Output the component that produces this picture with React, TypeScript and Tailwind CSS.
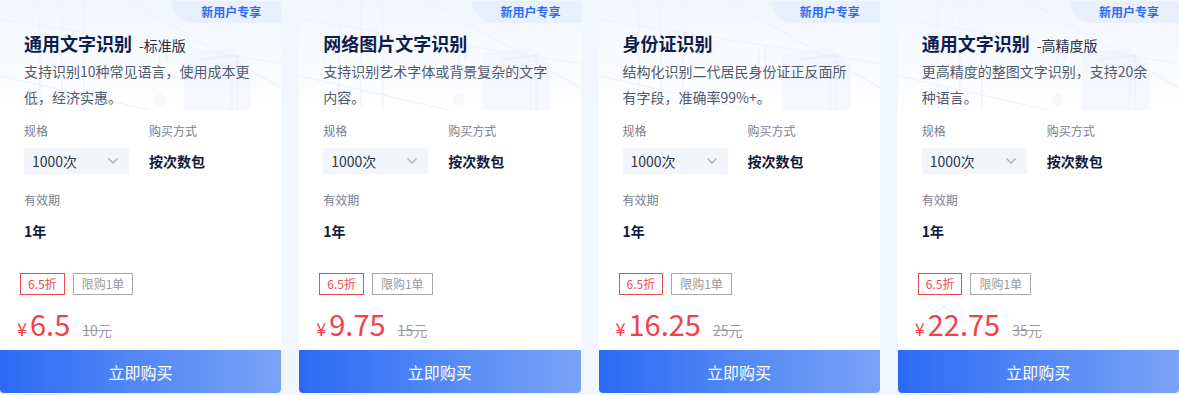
import React from 'react';

type Product = {
  title: string;
  edition?: string;
  desc: string;
  discount: string;
  price: string;
  original: string;
};

const products: Product[] = [
  { title: '通用文字识别', edition: '-标准版', desc: '支持识别10种常见语言，使用成本更低，经济实惠。', discount: '6.5折', price: '6.5', original: '10元' },
  { title: '网络图片文字识别', desc: '支持识别艺术字体或背景复杂的文字内容。', discount: '6.5折', price: '9.75', original: '15元' },
  { title: '身份证识别', desc: '结构化识别二代居民身份证正反面所有字段，准确率99%+。', discount: '6.5折', price: '16.25', original: '25元' },
  { title: '通用文字识别', edition: '-高精度版', desc: '更高精度的整图文字识别，支持20余种语言。', discount: '6.5折', price: '22.75', original: '35元' },
];

// faint decorative background behind the card title
const HeaderArt = () => (
  <svg className="absolute inset-0 w-full h-full pointer-events-none" viewBox="0 0 282 108" preserveAspectRatio="none" fill="none">
    <defs>
      <linearGradient id="fade" x1="0" y1="0" x2="0" y2="1">
        <stop offset="0" stopColor="#f1f5fd" />
        <stop offset="1" stopColor="#ffffff" />
      </linearGradient>
    </defs>
    <rect width="282" height="108" fill="url(#fade)" />
    <g stroke="#edf1fa" strokeWidth="1">
      <path d="M0 18 L282 62" />
      <path d="M40 0 L40 108" />
      <path d="M62 0 L62 108" />
      <path d="M84 0 L84 108" />
      <path d="M130 0 L282 86" />
      <path d="M0 74 L150 108" />
    </g>
    <g opacity="0.55">
      <path d="M184 52 L232 46 L252 62 L252 108 L184 108 Z" fill="#eef3fd" />
      <path d="M202 58 L238 54 L238 108" stroke="#dfe8fb" strokeWidth="2" />
      <path d="M214 66 L232 64 L232 108" stroke="#e5edfc" strokeWidth="3" />
      <path d="M160 48 L160 64" stroke="#e4ebf9" strokeWidth="2" />
      <path d="M167 44 L167 60" stroke="#e4ebf9" strokeWidth="2" />
      <circle cx="160" cy="98" r="6" fill="#eef2fb" />
    </g>
  </svg>
);

const Card = ({ p }: { p: Product }) => (
  <div className="flex-1 min-w-0 h-[392px] bg-white rounded-[4px] overflow-hidden flex flex-col">
    <div className="relative h-[109px] px-6 pt-[29px]">
      <HeaderArt />
      <div className="absolute top-0 right-0 w-[109px] h-[22px] bg-[#e8effd] rounded-bl-[22px] flex items-center justify-end pr-[20px] text-[12px] font-bold text-[#2f6cee]">
        新用户专享
      </div>
      <div className="relative flex items-baseline h-[26px]">
        <span className="text-[18px] font-bold text-[#101d4b]">{p.title}</span>
        {p.edition && <span className="ml-[7px] text-[14px] text-[#2a3040]">{p.edition}</span>}
      </div>
      <p className="relative mt-[2px] text-[14px] leading-[26px] text-[#525b6e] pr-[6px]">{p.desc}</p>
    </div>
    <div className="px-6 flex flex-col flex-1">
      <div className="grid grid-cols-[125px_1fr] mt-3">
        <div>
          <div className="text-[12px] leading-[18px] text-[#7a8090]">规格</div>
          <div className="mt-2 w-[105px] h-[26px] bg-[#f2f5fa] flex items-center justify-between pl-[8px] pr-[10px] text-[14px] text-[#2c3547]">
            <span>1000次</span>
            <svg width="12" height="8" viewBox="0 0 12 8" fill="none">
              <path d="M1.5 1.5 L6 6 L10.5 1.5" stroke="#a9afbb" strokeWidth="1.3" />
            </svg>
          </div>
        </div>
        <div>
          <div className="text-[12px] leading-[18px] text-[#7a8090]">购买方式</div>
          <div className="mt-2 h-[26px] flex items-center text-[14px] font-bold text-[#111a3c]">按次数包</div>
        </div>
      </div>
      <div className="mt-[17px] text-[12px] leading-[18px] text-[#7a8090]">有效期</div>
      <div className="mt-[12px] text-[14px] leading-[20px] font-bold text-[#111a3c]">1年</div>
      <div className="mt-8 flex gap-2 -ml-[4px]">
        <span className="h-[22px] px-[7px] border border-[#ef4a4f] text-[#ef4a4f] text-[12px] leading-[20px]">{p.discount}</span>
        <span className="h-[22px] px-[8px] border border-[#a8a8a8] text-[#9a9a9a] text-[12px] leading-[20px]">限购1单</span>
      </div>
      <div className="mt-[10px] flex items-baseline -ml-[7px] text-[#f2414b] h-[36px]">
        <span className="text-[18px] mr-[3px]">¥</span>
        <span className="text-[29px] leading-[36px]">{p.price}</span>
        <span className="ml-[12px] text-[14px] text-[#9c9c9c] line-through">{p.original}</span>
      </div>
    </div>
    <button className="h-[43px] w-full bg-gradient-to-r from-[#2a6af4] to-[#7aa3f6] text-white text-[16px] flex items-center justify-center">
      立即购买
    </button>
  </div>
);

export default function App() {
  return (
    <div className="w-[1179px] h-[395px] bg-[#f2f6fe] pt-[1px] flex gap-[18px] font-['Noto_Sans_CJK_SC','Noto_Sans',sans-serif]">
      {products.map((p, i) => (
        <Card key={i} p={p} />
      ))}
    </div>
  );
}
